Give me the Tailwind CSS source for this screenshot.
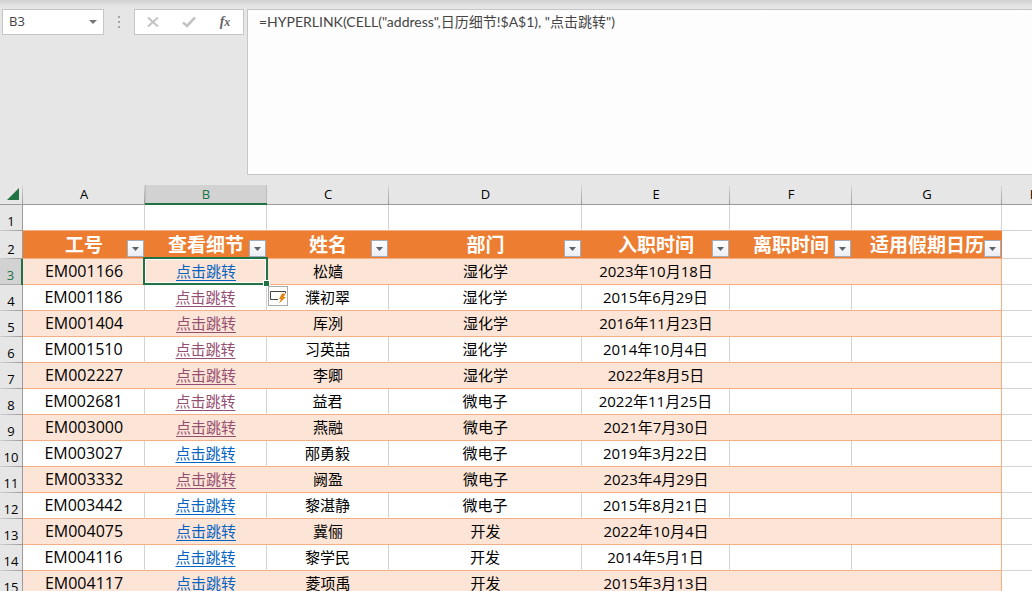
<!DOCTYPE html>
<html lang="zh-CN">
<head>
  <meta charset="UTF-8" />
  <meta name="viewport" content="width=device-width, initial-scale=1.0"/>
  <title>员工信息</title>
  <script src="https://cdn.jsdelivr.net/npm/@tailwindcss/browser@4"></script>
</head>
<body class="h-screen overflow-hidden flex flex-col bg-[#e6e6e6] text-black font-['Open_Sans','Noto_Sans_CJK_SC',sans-serif]">

  <!-- Formula bar -->
  <header class="flex items-start pt-2 pl-0.5 bg-linear-to-b from-[#d2d2d2] from-0% to-[#e6e6e6] to-4%">
    <div class="mt-px flex items-center w-[102px] h-[26px] border border-[#c6c6c6] bg-white">
      <input type="text" value="B3" aria-label="名称框" class="w-full min-w-0 pl-1.5 text-[13px] text-[#444] outline-none"/>
      <button type="button" aria-label="名称列表" class="shrink-0 px-1.5">
        <svg class="w-2 h-1" viewBox="0 0 8 4" fill="#777"><path d="M0 0h8L4 4z"/></svg>
      </button>
    </div>
    <svg class="mt-2 mx-3.5 w-[2px] h-3" viewBox="0 0 2 12" fill="#a6a6a6"><path d="M0 0h2v2H0zM0 5h2v2H0zM0 10h2v2H0z"/></svg>
    <div class="mt-px flex items-center w-[110px] h-[26px] border border-[#c6c6c6] bg-white">
      <button type="button" aria-label="取消" class="flex-1 flex justify-center">
        <svg class="w-3 h-3" viewBox="0 0 12 12" fill="none" stroke="#c3c3c3" stroke-width="2"><path d="M1 1.5L11 10.5M11 1.5L1 10.5"/></svg>
      </button>
      <button type="button" aria-label="输入" class="flex-1 flex justify-center">
        <svg class="w-3.5 h-3" viewBox="0 0 14 12" fill="none" stroke="#c3c3c3" stroke-width="2.6"><path d="M1 6.5L5 10L13 1.5"/></svg>
      </button>
      <button type="button" aria-label="插入函数" class="flex-1 text-center font-['Liberation_Serif',serif] italic font-bold text-sm leading-4 text-[#666]">f<span class="text-xs">x</span></button>
    </div>
    <textarea aria-label="编辑栏" spellcheck="false" class="mt-px ml-[3px] flex-1 h-[166px] resize-none border border-r-0 border-[#c6c6c6] bg-[#fdfdfd] pl-[11px] pt-0.5 text-sm leading-5 text-[#444] outline-none font-['Lato','Noto_Sans_CJK_SC',sans-serif]">=HYPERLINK(CELL("address",日历细节!$A$1), "点击跳转")</textarea>
  </header>

  <!-- Sheet -->
  <main class="flex-1 min-h-0 overflow-hidden pt-2.5">
    <table class="table-fixed w-[1067px] border-separate border-spacing-0 bg-white text-center">
      <colgroup>
        <col class="w-[23px]"/>
        <col class="w-[122px]"/>
        <col class="w-[122px]"/>
        <col class="w-[122px]"/>
        <col class="w-[193px]"/>
        <col class="w-[148px]"/>
        <col class="w-[122px]"/>
        <col class="w-[150px]"/>
        <col class="w-[65px]"/>
      </colgroup>
      <thead id="letters"></thead>
      <tbody id="rows"></tbody>
    </table>
  </main>

  <script>
    const letters = ["A", "B", "C", "D", "E", "F", "G", "H"];
    const titles = ["工号", "查看细节", "姓名", "部门", "入职时间", "离职时间", "适用假期日历"];
    // id, link visited, name, department, hire date
    const staff = [
      ["EM001166", false, "松嫱", "湿化学", "2023年10月18日"],
      ["EM001186", true, "濮初翠", "湿化学", "2015年6月29日"],
      ["EM001404", true, "厍冽", "湿化学", "2016年11月23日"],
      ["EM001510", true, "习英喆", "湿化学", "2014年10月4日"],
      ["EM002227", true, "李卿", "湿化学", "2022年8月5日"],
      ["EM002681", true, "益君", "微电子", "2022年11月25日"],
      ["EM003000", true, "燕融", "微电子", "2021年7月30日"],
      ["EM003027", false, "邴勇毅", "微电子", "2019年3月22日"],
      ["EM003332", true, "阙盈", "微电子", "2023年4月29日"],
      ["EM003442", false, "黎湛静", "微电子", "2015年8月21日"],
      ["EM004075", false, "冀俪", "开发", "2022年10月4日"],
      ["EM004116", false, "黎学民", "开发", "2014年5月1日"],
      ["EM004117", false, "菱项禹", "开发", "2015年3月13日"],
    ];

    const colHead = "h-5 px-0 pt-0 pb-0.5 border-b border-[#9b9b9b] text-[13px] leading-4 font-normal bg-no-repeat bg-right bg-[length:1px_100%] bg-[linear-gradient(#d9d9d9,#9b9b9b)]";
    const colHeadOn = "h-5 p-0 border-b-2 border-[#217346] text-[13px] leading-4 font-normal text-[#217346] bg-[#d2d2d2] shadow-[inset_1px_0_#bdbdbd,inset_-1px_0_#bdbdbd]";

    document.getElementById("letters").innerHTML = `<tr class="bg-[#e6e6e6]">
      <td class="${colHead}"><svg class="ml-[7px] w-3 h-3" viewBox="0 0 12 12" fill="#217346"><path d="M12 0v12H0z"/></svg></td>
      ${letters.map((l) => `<th scope="col" class="${l === "B" ? colHeadOn : colHead}">${l}</th>`).join("")}
    </tr>`;

    function rowHead(n, height) {
      const look = n === 3
        ? "border-r-2 border-[#217346] text-[#217346] bg-[#d2d2d2] shadow-[inset_0_-1px_#ababab]"
        : "border-r border-[#9b9b9b] bg-[#e6e6e6] bg-no-repeat bg-bottom bg-[length:100%_1px] bg-[linear-gradient(to_right,#d0d0d0,#9b9b9b)]";
      return `<th scope="row" class="${height} ${look} p-0 align-bottom text-[13px] leading-5 font-normal">${n}</th>`;
    }

    const filterButton = `<button type="button" aria-label="筛选" class="absolute right-px bottom-px w-[17px] h-[17px] flex items-center justify-center border border-[#a3acba] bg-linear-to-b from-white to-[#eceef4]">
      <svg class="w-[7px] h-1" viewBox="0 0 7 4" fill="#5f6368"><path d="M0 0h7L3.500 4z"/></svg></button>`;

    let html = `<tr>${rowHead(1, "h-[26px]")}
      ${titles.map(() => `<td class="border-r border-r-[#d4d4d4] border-b border-b-[#f4b084]"></td>`).join("")}
      <td class="border-b border-[#d4d4d4]"></td></tr>`;

    html += `<tr>${rowHead(2, "h-7")}
      ${titles.map((t) => `<th scope="col" class="relative p-0 bg-[#ed7d31] border-b border-[#f4b084] text-white text-[19px] leading-6 font-bold whitespace-nowrap">${t}${filterButton}</th>`).join("")}
      <td class="border-b border-[#d4d4d4]"></td></tr>`;

    const selection = `<span class="absolute -left-0.5 -right-px -top-0.5 -bottom-px border-2 border-[#217346] shadow-[inset_0_0_0_1px_#fff] pointer-events-none"></span>
      <span class="absolute -right-0.5 -bottom-0.5 z-10 w-[5px] h-[5px] bg-[#217346] outline outline-white"></span>
      <button type="button" aria-label="快速填充选项" class="absolute left-[123px] top-[27px] z-10 w-5 h-5 flex items-center justify-center border border-[#ababab] bg-white">
        <svg class="w-4 h-4" viewBox="0 0 16 16"><path d="M15.500 5V3.500H.5V11.500H8" fill="none" stroke="#444"/><path d="M12 5.500h4l-2.500 3.500H16L9 15.500l2-4.500H9z" fill="#e8830c"/></svg>
      </button>`;

    staff.forEach(([id, visited, name, dept, date], i) => {
      const n = i + 3;
      const cell = n % 2
        ? "px-0 pt-0 pb-0.5 bg-[#fce4d6] border-b border-[#f4b084]"
        : "px-0 pt-0 pb-0.5 border-r border-r-[#d4d4d4] border-b border-b-[#f4b084]";
      const last = n % 2
        ? "p-0 bg-[#fce4d6] border-r border-b border-[#f4b084]"
        : "p-0 border-r border-b border-[#f4b084]";
      const link = visited ? "text-[#954f72]" : "text-[#0563c1]";
      html += `<tr class="text-[15px] leading-5">${rowHead(n, "h-[26px]")}
        <td class="${cell} text-base leading-5">${id}</td>
        <td class="${cell} relative"><a href="#" class="${link} underline underline-offset-3">点击跳转</a>${n === 3 ? selection : ""}</td>
        <td class="${cell}">${name}</td>
        <td class="${cell}">${dept}</td>
        <td class="${cell}">${date}</td>
        <td class="${cell}"></td>
        <td class="${last}"></td>
        <td class="border-b border-[#d4d4d4]"></td></tr>`;
    });

    document.getElementById("rows").innerHTML = html;
  </script>
</body>
</html>
